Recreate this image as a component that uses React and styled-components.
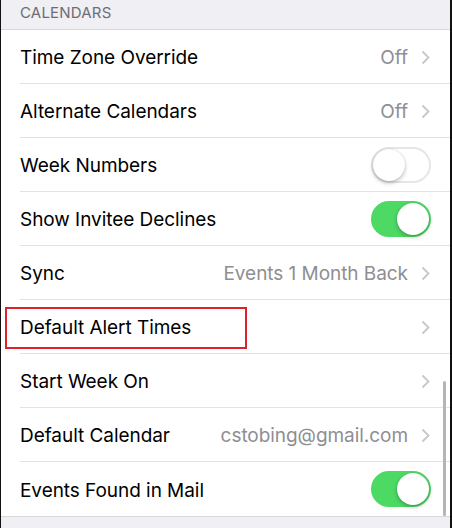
import React from 'react'
import styled, { createGlobalStyle } from 'styled-components'

const Global = createGlobalStyle`
  html, body {
    margin: 0;
    padding: 0;
    background: #efeff4;
  }
  body {
    font-family: Inter, "Liberation Sans", sans-serif;
    -webkit-font-smoothing: antialiased;
  }
`

const Screen = styled.div`
  position: relative;
  width: 452px;
  height: 528px;
  box-sizing: border-box;
  border-left: 1px solid #111;
  border-right: 2px solid #111;
  background: #efeff4;
  overflow: hidden;
`

const SectionHeader = styled.div`
  height: 29px;
  padding-left: 19px;
  font-size: 15px;
  color: #6d6d72;
  letter-spacing: 0.2px;
  line-height: 25px;
  border-bottom: 1px solid #d8d8dc;
`

const List = styled.div`
  background: #fff;
  border-bottom: 1px solid #d8d8dc;
`

const Row = styled.div`
  position: relative;
  height: 54px;
  margin-left: 19px;
  padding-right: 19px;
  padding-top: 2px;
  display: flex;
  align-items: center;
  box-sizing: border-box;
  border-bottom: ${p => (p.last ? 'none' : '1px solid #e3e3e7')};
`

const Label = styled.div`
  flex: 1;
  font-size: 19px;
  color: #000;
  letter-spacing: -0.05px;
`

const Value = styled.div`
  font-size: 19px;
  color: #8e8e93;
  margin-right: 13px;
  letter-spacing: -0.05px;
`

const Chevron = styled.svg`
  width: 9px;
  height: 15px;
  margin-right: 1px;
`

const Toggle = styled.div`
  position: relative;
  width: 60px;
  height: 36px;
  margin-top: -2px;
  border-radius: 18px;
  box-sizing: border-box;
  background: ${p => (p.on ? '#4cd964' : '#fff')};
  border: 2px solid ${p => (p.on ? '#4cd964' : '#e5e5ea')};
`

const Knob = styled.div`
  position: absolute;
  top: 0;
  left: ${p => (p.on ? '24px' : '0')};
  width: 32px;
  height: 32px;
  border-radius: 50%;
  background: #fff;
  box-shadow: 0 2px 4px rgba(0, 0, 0, 0.25), 0 0 1px rgba(0, 0, 0, 0.2);
`

const Highlight = styled.div`
  position: absolute;
  left: -15px;
  top: 7px;
  width: 242px;
  height: 42px;
  border: 2px solid #e0202a;
  box-sizing: border-box;
`

const Scrollbar = styled.div`
  position: absolute;
  right: 4px;
  top: 381px;
  width: 3px;
  height: 135px;
  border-radius: 2px;
  background: #b5b5b8;
`

const ChevronIcon = () => (
  <Chevron viewBox="0 0 9 15">
    <path d="M1.5 1.5 L7.5 7.5 L1.5 13.5" fill="none" stroke="#c7c7cc" strokeWidth="1.8" />
  </Chevron>
)

const rows = [
  { label: 'Time Zone Override', value: 'Off', chevron: true },
  { label: 'Alternate Calendars', value: 'Off', chevron: true },
  { label: 'Week Numbers', toggle: false },
  { label: 'Show Invitee Declines', toggle: true },
  { label: 'Sync', value: 'Events 1 Month Back', chevron: true },
  { label: 'Default Alert Times', chevron: true, highlight: true },
  { label: 'Start Week On', chevron: true },
  { label: 'Default Calendar', value: 'cstobing@gmail.com', chevron: true },
  { label: 'Events Found in Mail', toggle: true },
]

export default function App() {
  return (
    <Screen>
      <Global />
      <SectionHeader>CALENDARS</SectionHeader>
      <List>
        {rows.map((r, i) => (
          <Row key={r.label} last={i === rows.length - 1}>
            {r.highlight && <Highlight />}
            <Label>{r.label}</Label>
            {r.value && <Value>{r.value}</Value>}
            {r.chevron && <ChevronIcon />}
            {r.toggle !== undefined && (
              <Toggle on={r.toggle}>
                <Knob on={r.toggle} />
              </Toggle>
            )}
          </Row>
        ))}
      </List>
      <Scrollbar />
    </Screen>
  )
}
